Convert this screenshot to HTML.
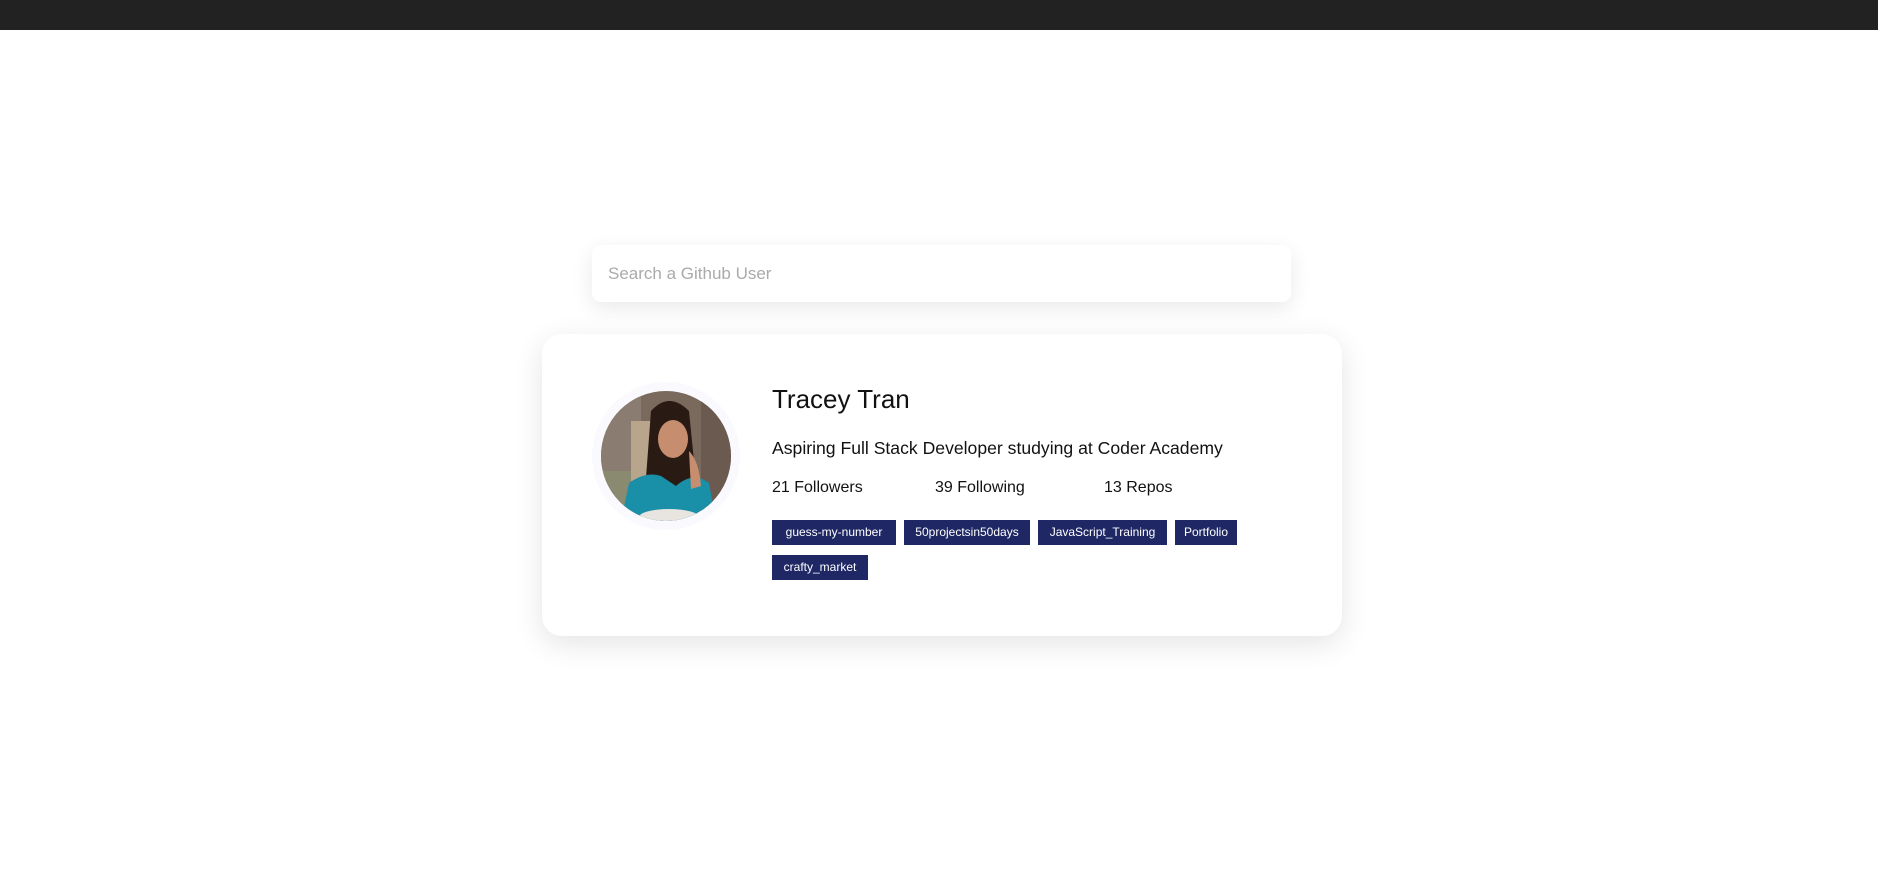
<!DOCTYPE html>
<html><head><meta charset="utf-8"><style>
*{box-sizing:border-box;margin:0;padding:0}
body{width:1878px;height:878px;background:#fff;font-family:"Liberation Sans",sans-serif;position:relative;overflow:hidden}
.top{position:absolute;left:0;top:0;width:1878px;height:30px;background:#222}
.search{position:absolute;left:592px;top:245px;width:699px;height:57px;background:#fff;border-radius:9px;box-shadow:0 6px 22px rgba(0,0,0,0.09);font-size:17px;color:#aaa;padding-left:16px;line-height:57px}
.card{position:absolute;left:542px;top:334px;width:800px;height:302px;background:#fff;border-radius:20px;box-shadow:0 8px 30px rgba(0,0,0,0.11)}
.ring{position:absolute;left:50px;top:48px;width:148px;height:148px;border-radius:50%;background:#fafafe}
.av{position:absolute;left:9px;top:9px;width:130px;height:130px;border-radius:50%;overflow:hidden}
.name{position:absolute;left:230px;top:50px;font-size:26px;color:#111}
.bio{position:absolute;left:230px;top:104px;font-size:17.6px;color:#111}
.st{position:absolute;top:145px;font-size:16px;color:#111}
.tag{position:absolute;height:25px;background:#1f2865;color:#fff;font-size:12px;line-height:25px;text-align:center}
</style></head><body>
<div class="top"></div>
<div class="search">Search a Github User</div>
<div class="card">
<div class="ring"><div class="av">
<svg width="130" height="130" viewBox="0 0 130 130">
<rect width="130" height="130" fill="#7a6a5e"/>
<rect x="0" y="0" width="40" height="130" fill="#8a7c70"/>
<rect x="30" y="30" width="20" height="60" fill="#b9a58c"/>
<rect x="100" y="0" width="30" height="130" fill="#6a5a50"/>
<rect x="0" y="80" width="30" height="50" fill="#8a8a70"/>
<path d="M50 20 Q68 0 88 20 L96 100 L44 100 Z" fill="#2a1a14"/>
<ellipse cx="72" cy="48" rx="15" ry="19" fill="#c68e6e"/>
<path d="M20 130 L28 92 Q45 80 60 85 L75 95 Q92 80 108 92 L115 130 Z" fill="#1a8fa8"/>
<path d="M88 60 Q98 70 100 95 L90 98 Z" fill="#c68e6e"/>
<ellipse cx="68" cy="126" rx="30" ry="8" fill="#e8e4e0"/>
</svg></div></div>
<div class="name">Tracey Tran</div>
<div class="bio">Aspiring Full Stack Developer studying at Coder Academy</div>
<div class="st" style="left:230px">21&nbsp;Followers</div>
<div class="st" style="left:393px">39&nbsp;Following</div>
<div class="st" style="left:562px">13&nbsp;Repos</div>
<div class="tag" style="left:230px;top:186px;width:124px">guess-my-number</div>
<div class="tag" style="left:362px;top:186px;width:126px">50projectsin50days</div>
<div class="tag" style="left:496px;top:186px;width:129px">JavaScript_Training</div>
<div class="tag" style="left:633px;top:186px;width:62px">Portfolio</div>
<div class="tag" style="left:230px;top:221px;width:96px">crafty_market</div>
</div>
</body></html>
